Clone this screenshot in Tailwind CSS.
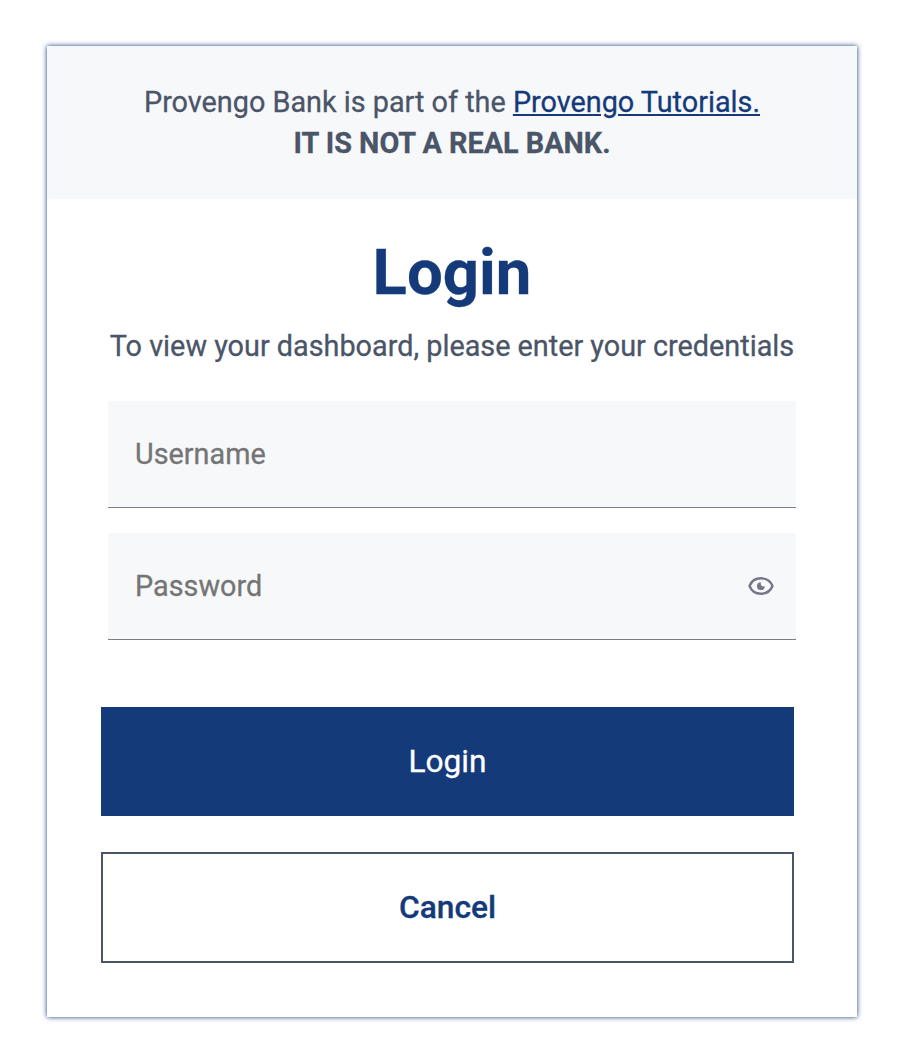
<!DOCTYPE html>
<html lang="en"><head><meta charset="utf-8"><title>Login</title>
<script src="https://cdn.jsdelivr.net/npm/@tailwindcss/browser@4"></script></head>
<body class="min-h-[1050px] bg-white pl-[47px] pt-[46px] font-['Roboto',sans-serif] text-[#4a5568] [-webkit-text-stroke:0.3px]">
<main class="h-[971px] w-[810px] bg-white shadow-[0_0_5px_#153a7a]">
<header class="h-[153px] bg-[#f7f8fa] pt-[36px] text-center text-[28.8px] leading-[41px]">
<p class="whitespace-nowrap">Provengo Bank is part of the <a class="text-[#153a7a] underline" href="#">Provengo Tutorials.</a></p>
<p class="font-bold">IT IS NOT A REAL BANK.</p>
</header>
<h1 class="mt-[36px] text-center text-[63.5px] leading-[76px] font-bold text-[#153a7a]">Login</h1>
<p class="mt-[15px] whitespace-nowrap text-center text-[28.8px] leading-[40px]">To view your dashboard, please enter your credentials</p>
<form class="mt-[35px]">
<div class="ml-[61px] flex h-[107px] w-[688px] items-center border-b border-[#7d7d85] bg-[#f7f8fa] px-[27px] pt-[2px] text-[28.8px] text-[#757575]">Username</div>
<div class="ml-[61px] mt-[25px] flex h-[107px] w-[688px] items-center justify-between border-b border-[#7d7d85] bg-[#f7f8fa] pl-[27px] pr-[21px] pt-[2px] text-[28.8px] text-[#757575]">Password
<svg class="mb-[2px] h-[28px] w-[28px]" viewBox="0 0 28 28" fill="none" stroke="#77758a" stroke-width="2.4" stroke-linejoin="round"><path d="M2.500 14C4.500 9 9 6.300 14 6.300S23.500 9 25.500 14C23.500 19 19 21.700 14 21.700S4.500 19 2.500 14Z"/><path d="M13.800 10.300A3.900 3.900 0 1 0 17.800 14.300Q13.500 15 13.800 10.300Z" fill="#77758a" stroke="none"/></svg></div>
<button type="button" class="ml-[54px] mt-[67px] block h-[109px] w-[693px] bg-[#153a7a] text-[31.7px] text-white">Login</button>
<button type="button" class="ml-[54px] mt-[36px] block h-[111px] w-[693px] border-2 border-[#4a5568] text-[31.7px] font-medium text-[#153a7a]">Cancel</button>
</form>
</main></body></html>
